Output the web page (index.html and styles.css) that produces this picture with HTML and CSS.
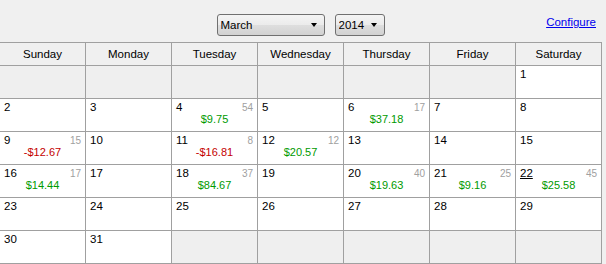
FILE: index.html
```html
<!DOCTYPE html>
<html>
<head>
<meta name="viewport" content="width=device-width, initial-scale=1">
<title> Calendar </title>
<link rel="stylesheet" href="styles.css">
</head>
  <body>
    <div class="page">
      <div class="topbar">
        <div class="pickers">
          <span class="picker month"><select name="month"><option>March</option></select></span>
          <span class="picker year"><select name="year"><option>2014</option></select></span>
        </div>
        <a href="#" class="configure">Configure</a>
      </div>

      <div class="calendar">
        <div class="dayname">Sunday</div>
        <div class="dayname">Monday</div>
        <div class="dayname">Tuesday</div>
        <div class="dayname">Wednesday</div>
        <div class="dayname">Thursday</div>
        <div class="dayname">Friday</div>
        <div class="dayname">Saturday</div>

        <div class="cell empty"></div>
        <div class="cell empty"></div>
        <div class="cell empty"></div>
        <div class="cell empty"></div>
        <div class="cell empty"></div>
        <div class="cell empty"></div>
        <div class="cell"><div class="top"><span class="num">1</span></div></div>

        <div class="cell"><div class="top"><span class="num">2</span></div></div>
        <div class="cell"><div class="top"><span class="num">3</span></div></div>
        <div class="cell"><div class="top"><span class="num">4</span><span class="count">54</span></div><div class="amount gain">$9.75</div></div>
        <div class="cell"><div class="top"><span class="num">5</span></div></div>
        <div class="cell"><div class="top"><span class="num">6</span><span class="count">17</span></div><div class="amount gain">$37.18</div></div>
        <div class="cell"><div class="top"><span class="num">7</span></div></div>
        <div class="cell"><div class="top"><span class="num">8</span></div></div>

        <div class="cell"><div class="top"><span class="num">9</span><span class="count">15</span></div><div class="amount loss">-$12.67</div></div>
        <div class="cell"><div class="top"><span class="num">10</span></div></div>
        <div class="cell"><div class="top"><span class="num">11</span><span class="count">8</span></div><div class="amount loss">-$16.81</div></div>
        <div class="cell"><div class="top"><span class="num">12</span><span class="count">12</span></div><div class="amount gain">$20.57</div></div>
        <div class="cell"><div class="top"><span class="num">13</span></div></div>
        <div class="cell"><div class="top"><span class="num">14</span></div></div>
        <div class="cell"><div class="top"><span class="num">15</span></div></div>

        <div class="cell"><div class="top"><span class="num">16</span><span class="count">17</span></div><div class="amount gain">$14.44</div></div>
        <div class="cell"><div class="top"><span class="num">17</span></div></div>
        <div class="cell"><div class="top"><span class="num">18</span><span class="count">37</span></div><div class="amount gain">$84.67</div></div>
        <div class="cell"><div class="top"><span class="num">19</span></div></div>
        <div class="cell"><div class="top"><span class="num">20</span><span class="count">40</span></div><div class="amount gain">$19.63</div></div>
        <div class="cell"><div class="top"><span class="num">21</span><span class="count">25</span></div><div class="amount gain">$9.16</div></div>
        <div class="cell"><div class="top"><span class="num today">22</span><span class="count">45</span></div><div class="amount gain">$25.58</div></div>

        <div class="cell"><div class="top"><span class="num">23</span></div></div>
        <div class="cell"><div class="top"><span class="num">24</span></div></div>
        <div class="cell"><div class="top"><span class="num">25</span></div></div>
        <div class="cell"><div class="top"><span class="num">26</span></div></div>
        <div class="cell"><div class="top"><span class="num">27</span></div></div>
        <div class="cell"><div class="top"><span class="num">28</span></div></div>
        <div class="cell"><div class="top"><span class="num">29</span></div></div>

        <div class="cell"><div class="top"><span class="num">30</span></div></div>
        <div class="cell"><div class="top"><span class="num">31</span></div></div>
        <div class="cell empty"></div>
        <div class="cell empty"></div>
        <div class="cell empty"></div>
        <div class="cell empty"></div>
        <div class="cell empty"></div>
      </div>
    </div>
  </body>
</html>
```

FILE: styles.css
```css
body {
  margin: 0;
  background-color: #f0f0f0;
  font-family: "Liberation Sans", Arial, sans-serif;
  font-size: 11.5px;
  color: #000;
  overflow: hidden;
}

.page {
  width: 603px;
  margin-left: -1px;
}

.topbar {
  height: 42px;
  display: grid;
  grid-template-columns: 1fr auto 1fr;
}

.pickers {
  grid-column: 2;
  display: flex;
  gap: 10px;
  margin-top: 14px;
  align-self: start;
}

.picker {
  position: relative;
  display: block;
}

.picker select {
  appearance: none;
  -webkit-appearance: none;
  height: 22px;
  margin: 0;
  padding: 0 0 0 3px;
  border: 1px solid #707070;
  border-radius: 3px;
  background: linear-gradient(#f4f4f4 0%, #ebebeb 50%, #dedede 50%, #d2d2d2 100%);
  font-family: "Liberation Sans", Arial, sans-serif;
  font-size: 11.5px;
  color: #000;
}

.month select {
  width: 108px;
}

.year select {
  width: 50px;
}

.picker::after {
  content: "";
  position: absolute;
  top: 9px;
  right: 8px;
  border-left: 3.5px solid transparent;
  border-right: 3.5px solid transparent;
  border-top: 4px solid #000;
  pointer-events: none;
}

.configure {
  grid-column: 3;
  justify-self: end;
  align-self: start;
  margin-top: 15px;
  margin-right: 6px;
  line-height: 14px;
  color: #0000ee;
  text-decoration: underline;
}

.calendar {
  display: grid;
  grid-template-columns: repeat(7, 85px);
  grid-template-rows: 22px repeat(6, 32px);
  gap: 1px;
  padding: 1px;
  background-color: #a0a0a0;
}

.dayname {
  background-color: #f0f0f0;
  display: flex;
  align-items: center;
  justify-content: center;
}

.cell {
  background-color: #fff;
  padding: 2px 4px 0 4px;
  line-height: 13px;
}

.cell.empty {
  background-color: #efefef;
}

.top {
  display: flex;
  justify-content: space-between;
  align-items: baseline;
}

.num {
  font-size: 11.5px;
}

.today {
  text-decoration: underline;
}

.count {
  font-size: 10px;
  color: #a0a0a0;
}

.amount {
  text-align: center;
  font-size: 11px;
  margin-top: -1px;
}

.gain {
  color: #009a00;
}

.loss {
  color: #c40000;
}
```
